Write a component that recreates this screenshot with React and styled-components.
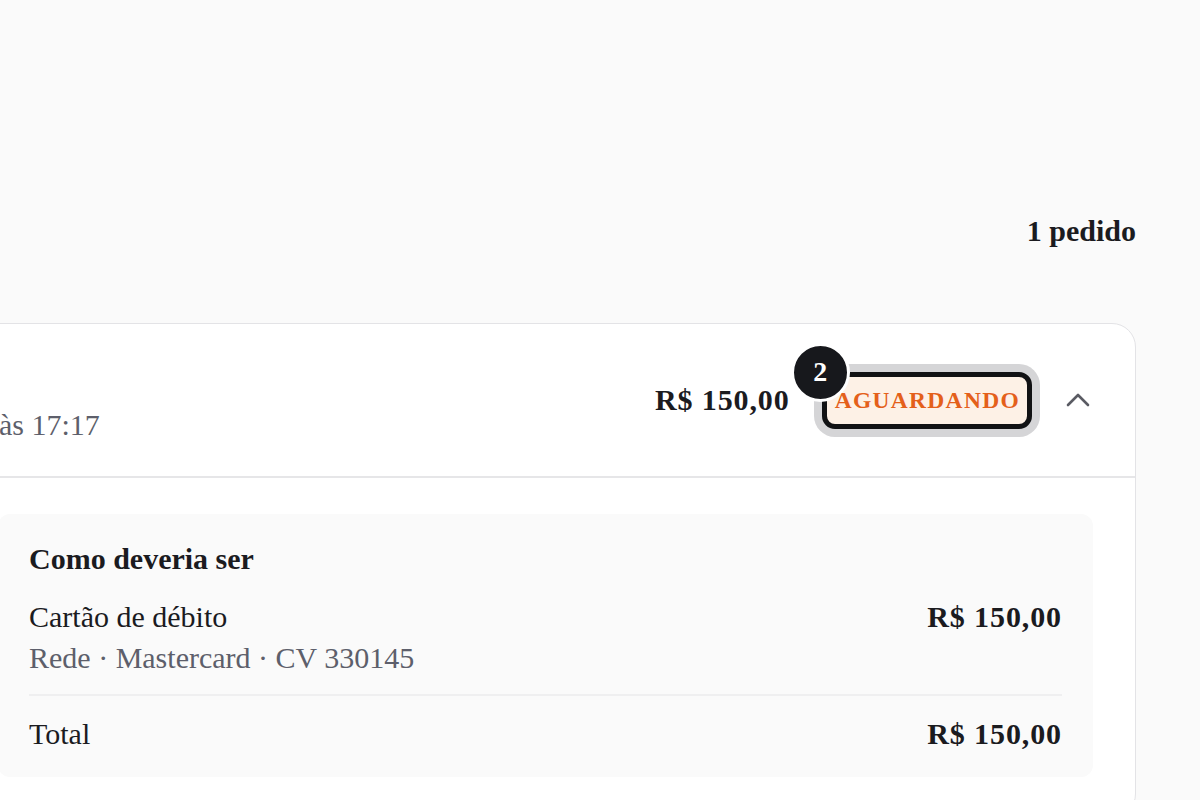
import React from "react";
import styled, { createGlobalStyle } from "styled-components";

const GlobalStyle = createGlobalStyle`
  html, body {
    margin: 0;
    padding: 0;
    background: #fafafa;
    font-family: "Liberation Serif", "DejaVu Serif", serif;
    color: #1b1b1f;
    overflow: hidden;
  }
`;

const Page = styled.div`
  width: 1200px;
  height: 800px;
  box-sizing: border-box;
  padding: 213px 64px 0 0;
  overflow: hidden;
`;

const CountRow = styled.div`
  display: flex;
  justify-content: flex-end;
  font-size: 30px;
  line-height: 36px;
  font-weight: 700;
`;

const Card = styled.section`
  margin: 74px 0 0 -42px;
  background: #fff;
  border: 1px solid #e3e3e6;
  border-radius: 24px;
`;

const Header = styled.header`
  height: 152px;
  display: flex;
  align-items: center;
  justify-content: space-between;
  padding: 0 45px 0 40px;
  border-bottom: 2px solid #e6e6e8;
`;

const Meta = styled.div`
  padding-top: 50px;
  font-size: 30px;
  line-height: 36px;
  color: #5d5f6b;
`;

const Actions = styled.div`
  display: flex;
  align-items: center;
`;

const Amount = styled.span`
  font-size: 30px;
  line-height: 36px;
  font-weight: 700;
  letter-spacing: 0.9px;
`;

const Price = styled(Amount)`
  margin-right: 32px;
`;

const Badge = styled.span`
  position: relative;
  display: inline-flex;
  align-items: center;
  height: 47px;
  padding: 0 7px 0 8px;
  border: 5px solid #111214;
  border-radius: 13px;
  background: #fdf1e6;
  box-shadow: 0 0 0 8px #d5d5d7;
  color: #e4601a;
  font-size: 23.5px;
  font-weight: 700;
  letter-spacing: 1.3px;
`;

const Step = styled.span`
  position: absolute;
  left: -36px;
  top: -34px;
  width: 53px;
  height: 53px;
  border: 3px solid #fff;
  border-radius: 50%;
  background: #17181c;
  color: #fff;
  display: flex;
  align-items: center;
  justify-content: center;
  font-size: 28px;
  font-weight: 700;
  letter-spacing: 0;
`;

const Toggle = styled.button`
  margin-left: 34px;
  padding: 0;
  border: 0;
  background: none;
  display: flex;
  color: #5a5b63;
`;

const Body = styled.div`
  padding: 36px 42px 40px 39px;
`;

const Panel = styled.div`
  background: #fafafa;
  border-radius: 12px;
  padding: 27px 31px 25px;
`;

const Heading = styled.div`
  font-size: 30px;
  line-height: 36px;
  font-weight: 700;
`;

const Row = styled.div`
  display: flex;
  justify-content: space-between;
  align-items: flex-start;
  margin-top: ${({ $top }) => $top || 0}px;
  font-size: 30px;
  line-height: 36px;
`;

const Label = styled.div``;

const Sub = styled.div`
  margin-top: 6px;
  color: #5d5f6b;
  line-height: 34px;
`;

const Divider = styled.hr`
  margin: 19px 0 0;
  border: 0;
  border-top: 2px solid #efeff0;
`;

export default function App() {
  return (
    <>
      <GlobalStyle />
      <Page>
        <CountRow>1 pedido</CountRow>
        <Card>
          <Header>
            <Meta>às 17:17</Meta>
            <Actions>
              <Price>R$ 150,00</Price>
              <Badge>
                <Step>2</Step>
                AGUARDANDO
              </Badge>
              <Toggle aria-label="Recolher">
                <svg width="24" height="16" viewBox="0 0 24 16" fill="none">
                  <polyline
                    points="2,13 12,3 22,13"
                    stroke="currentColor"
                    strokeWidth="2.6"
                    strokeLinecap="round"
                    strokeLinejoin="round"
                  />
                </svg>
              </Toggle>
            </Actions>
          </Header>
          <Body>
            <Panel>
              <Heading>Como deveria ser</Heading>
              <Row $top={22}>
                <Label>
                  Cartão de débito
                  <Sub>Rede · Mastercard · CV 330145</Sub>
                </Label>
                <Amount>R$ 150,00</Amount>
              </Row>
              <Divider />
              <Row $top={20}>
                <Label>Total</Label>
                <Amount>R$ 150,00</Amount>
              </Row>
            </Panel>
          </Body>
        </Card>
      </Page>
    </>
  );
}
